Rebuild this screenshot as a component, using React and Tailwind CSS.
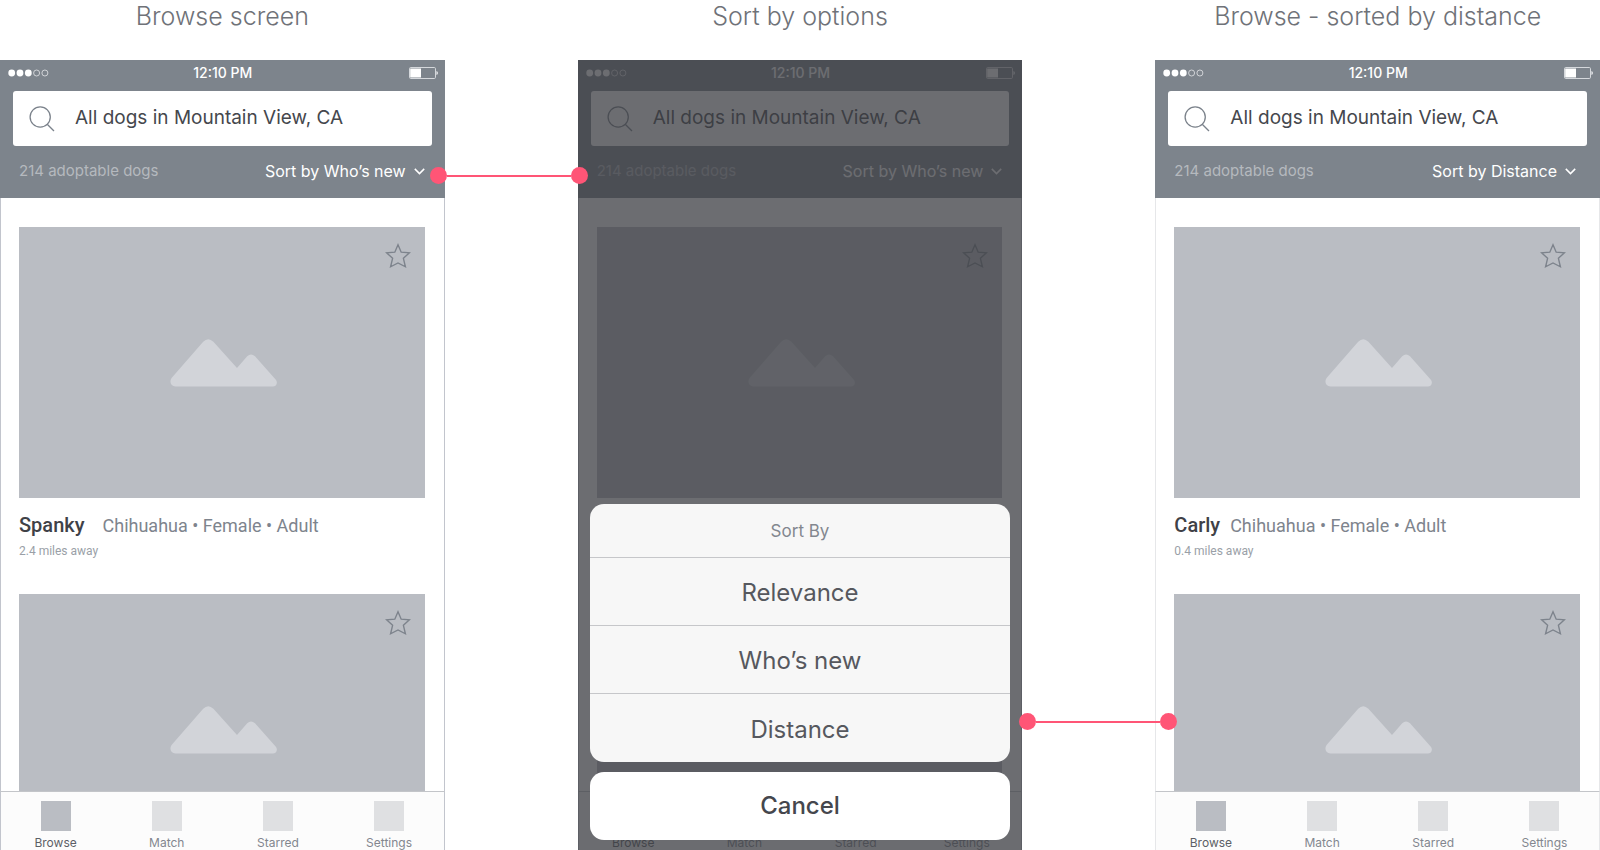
import React from 'react';

const tabs = ['Browse', 'Match', 'Starred', 'Settings'];

function SignalDots() {
  return (
    <svg width="41" height="8" viewBox="0 0 41 8" aria-hidden="true">
      <circle cx="3.7" cy="4" r="3.4" fill="#fff" />
      <circle cx="12" cy="4" r="3.4" fill="#fff" />
      <circle cx="20.3" cy="4" r="3.4" fill="#fff" />
      <circle cx="28.6" cy="4" r="3" fill="none" stroke="#e4e6e9" strokeWidth="0.8" />
      <circle cx="36.9" cy="4" r="3" fill="none" stroke="#e4e6e9" strokeWidth="0.8" />
    </svg>
  );
}

function Battery() {
  return (
    <svg width="29" height="12" viewBox="0 0 29 12" aria-hidden="true">
      <rect x="0.5" y="0.5" width="26" height="11" rx="1.2" fill="none" stroke="#d5d8dc" />
      <rect x="1.2" y="1.5" width="10.8" height="9" fill="#fff" />
      <path d="M27.4 4 Q29 4.4 29 6 T27.4 8Z" fill="#e4e6e9" />
    </svg>
  );
}

function SearchIcon() {
  return (
    <svg width="26" height="26" viewBox="0 0 26 26" fill="none" stroke="#7b828b" strokeWidth="1.3" aria-hidden="true">
      <circle cx="11.2" cy="11" r="10.1" />
      <path d="M18.2 18.2 L25 25" />
    </svg>
  );
}

function Chevron() {
  return (
    <svg width="11" height="7" viewBox="0 0 11 7" fill="none" stroke="#fff" strokeWidth="1.5" aria-hidden="true">
      <path d="M0.8 0.9 L5.5 5.6 L10.2 0.9" />
    </svg>
  );
}

function StarIcon() {
  return (
    <svg width="26" height="26" viewBox="0 0 26 26" fill="none" stroke="#7d838c" strokeWidth="1.4" aria-hidden="true">
      <path d="M13 1.8 L16.2 9.2 L24.4 9.8 L18.4 15.3 L20.4 23.8 L13 20 L5.6 23.8 L7.6 15.3 L1.6 9.8 L9.8 9.2Z" />
    </svg>
  );
}

function Mountains() {
  return (
    <svg width="107" height="48" viewBox="0 0 107 48" aria-hidden="true">
      <path
        fill="#d2d4d9"
        d="M5.5 47.5 C1 47.5 -1.2 42.5 2 38.5 L33.2 2.8 Q38.2 -2.3 43.4 2.8 L67 29 L77.2 17.3 Q81 13.6 85 17.3 L105.4 40.2 C108.4 43.6 106.4 47.5 102.8 47.5Z"
      />
    </svg>
  );
}

function Photo() {
  return (
    <div className="relative flex h-[271px] items-center justify-center bg-[#babdc3] pl-[3px]">
      <Mountains />
      <button type="button" aria-label="Star this dog" className="absolute right-[14px] top-4">
        <StarIcon />
      </button>
    </div>
  );
}

function Caption({ dog, distance, nameGap }) {
  return (
    <div className="pt-[13px] font-[Roboto,sans-serif]">
      <h2 className={`flex items-baseline leading-6 ${nameGap}`}>
        <span className="text-xl font-medium text-[#3f4147]">{dog}</span>
        <span className="text-lg text-[#7e848d]">Chihuahua • Female • Adult</span>
      </h2>
      <p className="mt-[3px] text-xs leading-4 text-[#9a9fa7]">{distance} miles away</p>
    </div>
  );
}

function Screen({ sort, sortInset, frame, inert, children }) {
  return (
    <div inert={inert} className="flex min-h-0 flex-1 flex-col">
      <header className="h-[138px] shrink-0 bg-[#7d848c] px-[13px] text-white">
        <div className="-ml-[5px] -mr-[6px] grid h-[31px] grid-cols-3 items-center pb-[6px]">
          <SignalDots />
          <span className="text-center text-sm font-medium leading-none">12:10 PM</span>
          <span className="justify-self-end">
            <Battery />
          </span>
        </div>
        <label className="flex h-[55px] items-center gap-[20px] rounded-[3px] bg-white pl-4">
          <SearchIcon />
          <input
            type="text"
            aria-label="Search dogs"
            defaultValue="All dogs in Mountain View, CA"
            className="min-w-0 flex-1 bg-transparent text-[19px] text-[#45474d] outline-none"
          />
        </label>
        <div className={`flex h-[50px] items-center justify-between pl-[6px] ${sortInset}`}>
          <span className="text-[15px] text-[#b5b9be]">214 adoptable dogs</span>
          <button type="button" aria-haspopup="dialog" className="flex items-center gap-2 text-base">
            <span>Sort by {sort}</span>
            <Chevron />
          </button>
        </div>
      </header>
      <main className={`min-h-0 flex-1 overflow-hidden border-x bg-white pl-[18px] pr-[19px] pt-[29px] ${frame}`}>
        <article className="h-[367px]">
          <Photo />
          {children}
        </article>
        <article>
          <Photo />
        </article>
      </main>
      <nav className={`h-[59px] shrink-0 border-x border-t border-t-[#c3c5c9] bg-[#fcfcfc] ${frame}`}>
        <div className="-mx-px grid grid-cols-4">
          {tabs.map((tab, i) => (
            <a key={tab} href={'#' + tab.toLowerCase()} className="flex flex-col items-center gap-[5px] pt-[9px]">
              <span className={i === 0 ? 'size-[30px] shrink-0 bg-[#babdc3]' : 'size-[30px] shrink-0 bg-[#dfe0e2]'} />
              <span className={i === 0 ? 'text-xs leading-[14px] text-[#5c5f66]' : 'text-xs leading-[14px] text-[#83878f]'}>
                {tab}
              </span>
            </a>
          ))}
        </div>
      </nav>
    </div>
  );
}

function Connector({ place }) {
  return (
    <div aria-hidden="true" className={`absolute left-full z-20 flex w-[158px] items-center ${place}`}>
      <span className="size-[17px] rounded-full bg-[#ff5576]" />
      <span className="h-[2px] flex-1 bg-[#ff5576]" />
      <span className="size-[17px] rounded-full bg-[#ff5576]" />
    </div>
  );
}

function SortSheet() {
  return (
    <div role="dialog" aria-label="Sort By" className="absolute inset-0 flex flex-col justify-end gap-[10px] bg-[#3b3c41]/75 px-3 pb-[10px]">
      <div className="divide-y divide-[#c6c7ca] overflow-hidden rounded-[14px] bg-[#f7f7f7] text-center">
        <h2 className="h-[54px] pt-px text-[17px] leading-[52px] text-[#83878f]">Sort By</h2>
        {['Relevance', 'Who’s new', 'Distance'].map((option) => (
          <button key={option} type="button" className="block h-[68px] w-full pt-[3px] text-2xl text-[#56585e]">
            {option}
          </button>
        ))}
      </div>
      <button type="button" className="h-[68px] rounded-[14px] bg-white text-2xl font-medium text-[#45474d]">
        Cancel
      </button>
    </div>
  );
}

function Flow({ title, children }) {
  return (
    <section className="flex min-w-0 flex-1 flex-col">
      <h1 className="h-[60px] whitespace-nowrap text-center text-[25px] font-light leading-8 text-[#6f7278]">{title}</h1>
      <div className="relative flex min-h-0 flex-1 flex-col">{children}</div>
    </section>
  );
}

export default function App() {
  return (
    <div className="flex h-screen gap-[133px] overflow-hidden bg-white font-[Inter,sans-serif]">
      <Flow title="Browse screen">
        <Screen sort="Who’s new" sortInset="pr-[7px]" frame="border-x-[#c2c5cd]">
          <Caption dog="Spanky" distance="2.4" nameGap="gap-[18px]" />
        </Screen>
        <Connector place="top-[107px] -ml-[15px]" />
      </Flow>
      <Flow title="Sort by options">
        <Screen sort="Who’s new" sortInset="pr-[7px]" frame="border-x-[#c2c5cd]" inert />
        <SortSheet />
        <Connector place="top-[653px] -ml-[3px]" />
      </Flow>
      <Flow title="Browse - sorted by distance">
        <Screen sort="Distance" sortInset="pr-[11px]" frame="border-x-[#e6e7e9]">
          <Caption dog="Carly" distance="0.4" nameGap="gap-[10px]" />
        </Screen>
      </Flow>
    </div>
  );
}
